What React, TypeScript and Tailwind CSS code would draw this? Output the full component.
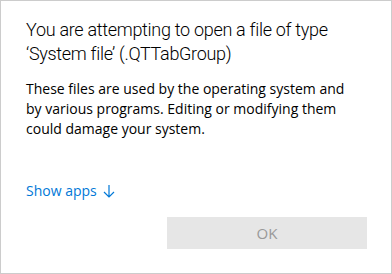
export default function App() {
  return (
    <div
      className="w-[392px] h-[274px] bg-white border border-[#cccccc] flex flex-col text-black"
      style={{ fontFamily: '"Segoe UI", "Open Sans", "Noto Sans", sans-serif' }}
    >
      <div className="pl-[25px] pt-[17px]">
        <h1
          className="text-[18px] leading-[24px] font-light whitespace-nowrap tracking-[-0.3px]"
          style={{ fontFamily: 'Roboto, "Open Sans", sans-serif' }}
        >
          You are attempting to open a file of type
          <br />
          ‘System file’ (.QTTabGroup)
        </h1>
        <p className="mt-[13px] text-[14px] leading-[20px] whitespace-nowrap">
          These files are used by the operating system and
          <br />
          by various programs. Editing or modifying them
          <br />
          could damage your system.
        </p>
        <div className="mt-[42px] flex items-center gap-[6px] text-[14px] leading-[20px] text-[#0078d7]">
          <span>Show apps</span>
          <svg width="12" height="14" viewBox="0 0 12 14" fill="none" stroke="#0078d7" strokeWidth="1.2">
            <path d="M6 1v12M1 8l5 5 5-5" />
          </svg>
        </div>
      </div>
      <div className="flex justify-end pr-[24px] mt-[16px]">
        <button className="w-[200px] h-[32px] bg-[#e6e6e6] text-[#999999] text-[15px] flex items-center justify-center">
          OK
        </button>
      </div>
    </div>
  );
}
